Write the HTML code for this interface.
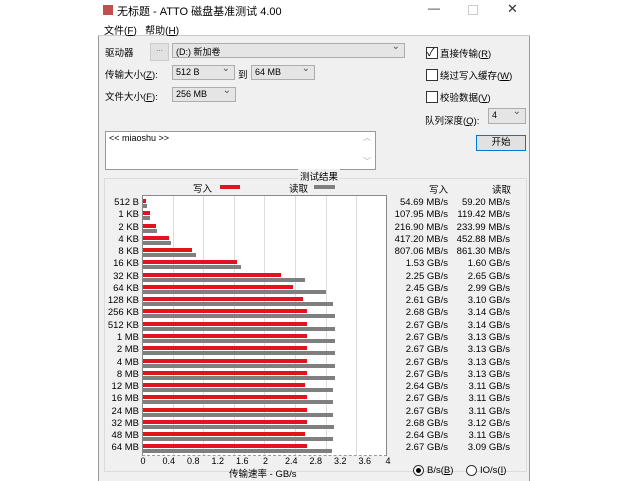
<!DOCTYPE html>
<html><head><meta charset="utf-8"><style>
*{margin:0;padding:0;box-sizing:border-box}
body{width:640px;height:481px;background:#fff;position:relative;overflow:hidden;font-family:"Liberation Sans","Noto Sans CJK SC",sans-serif;font-size:9.5px;color:#000}
.a{position:absolute;white-space:nowrap}
.win{position:absolute;left:98px;top:0;width:432px;height:481px;border:1px solid #9a9a9a;border-bottom:none;background:#f0f0f0}
.combo{position:absolute;background:#e5e5e5;border:1px solid #adadad;height:15px;padding:1px 3px;font-size:9px}
.combo:after{content:"⌄";position:absolute;right:4px;top:-3px;font-size:10px;color:#555}
.cb{position:absolute;width:12px;height:12px;border:1px solid #333;background:#fff}
.row{position:absolute;height:4px}
</style></head><body>
<div class="win"></div>
<div class="a" style="left:98px;top:0;width:432px;height:36px;background:#fff;border-bottom:1px solid #ccc"></div>
<div class="a" style="left:103px;top:5px;width:10px;height:10px;background:#c0504d"></div>
<div class="a" style="left:117px;top:3px;font-size:11px">无标题 - ATTO 磁盘基准测试 4.00</div>
<div class="a" style="left:428px;top:1px;font-size:12px;color:#333">—</div>
<div class="a" style="left:468px;top:5px;width:10px;height:10px;border:1px solid #ccc"></div>
<div class="a" style="left:507px;top:1px;font-size:13px;color:#333">✕</div>
<div class="a" style="left:104px;top:22px;font-size:10px">文件(<u>F</u>)&nbsp;&nbsp; 帮助(<u>H</u>)</div>

<div class="a" style="left:105px;top:45px">驱动器</div>
<div class="a" style="left:150px;top:43px;width:19px;height:18px;background:#e1e1e1;border:1px solid #ccc;font-size:8px;text-align:center;color:#666">...</div>
<div class="combo" style="left:172px;top:43px;width:233px">(D:) 新加卷</div>
<div class="a" style="left:105px;top:67px">传输大小(<u>Z</u>):</div>
<div class="combo" style="left:172px;top:65px;width:63px">512 B</div>
<div class="a" style="left:238px;top:67px">到</div>
<div class="combo" style="left:251px;top:65px;width:64px">64 MB</div>
<div class="a" style="left:105px;top:89px">文件大小(<u>F</u>):</div>
<div class="combo" style="left:172px;top:87px;width:64px">256 MB</div>

<div class="cb" style="left:426px;top:47px"></div><div class="a" style="left:427px;top:44px;font-size:11px">✓</div>
<div class="a" style="left:440px;top:46px">直接传输(<u>R</u>)</div>
<div class="cb" style="left:426px;top:69px"></div><div class="a" style="left:440px;top:68px">绕过写入缓存(<u>W</u>)</div>
<div class="cb" style="left:426px;top:91px"></div><div class="a" style="left:440px;top:90px">校验数据(<u>V</u>)</div>
<div class="a" style="left:425px;top:113px">队列深度(<u>Q</u>):</div>
<div class="combo" style="left:488px;top:108px;width:38px;height:16px">4</div>

<div class="a" style="left:105px;top:131px;width:271px;height:39px;background:#fff;border:1px solid #999;padding:1px 3px;font-size:9px">&lt;&lt; miaoshu &gt;&gt;</div>
<div class="a" style="left:363px;top:132px;font-size:8px;color:#aaa">︿</div>
<div class="a" style="left:363px;top:156px;font-size:8px;color:#aaa">﹀</div>
<div class="a" style="left:476px;top:135px;width:50px;height:16px;background:#e1e1e1;border:1px solid #0078d7;text-align:center;line-height:14px">开始</div>

<div class="a" style="left:104px;top:178px;width:423px;height:294px;border:1px solid #dcdcdc"></div>
<div class="a" style="left:298px;top:169px;font-size:9.5px;background:#f0f0f0;padding:0 2px">测试结果</div>
<div class="a" style="left:193px;top:181px">写入</div>
<div class="a" style="left:220px;top:185px;width:20px;height:4px;background:#e0141e"></div>
<div class="a" style="left:289px;top:181px">读取</div>
<div class="a" style="left:314px;top:185px;width:21px;height:4px;background:#7f7f7f"></div>
<div class="a" style="left:142px;top:195px;width:245px;height:261px;background:#fff;border:1px solid #888;border-bottom:1px dashed #999"></div>
<div class="a" style="left:429px;top:182px">写入</div>
<div class="a" style="left:492px;top:182px">读取</div>
<div id="c"></div>
<div class="a" style="left:229px;top:466px">传输速率 - GB/s</div>
<div class="a" style="left:413px;top:465px;width:11px;height:11px;border:1px solid #333;border-radius:50%;background:#fff"><div style="margin:2px;width:5px;height:5px;border-radius:50%;background:#000"></div></div>
<div class="a" style="left:427px;top:465px">B/s(<u>B</u>)</div>
<div class="a" style="left:466px;top:465px;width:11px;height:11px;border:1px solid #333;border-radius:50%;background:#fff"></div>
<div class="a" style="left:480px;top:465px">IO/s(<u>I</u>)</div>
<script>
var L=["512 B","1 KB","2 KB","4 KB","8 KB","16 KB","32 KB","64 KB","128 KB","256 KB","512 KB","1 MB","2 MB","4 MB","8 MB","12 MB","16 MB","24 MB","32 MB","48 MB","64 MB"];
var W=[.05469,.10795,.2169,.4172,.80706,1.53,2.25,2.45,2.61,2.68,2.67,2.67,2.67,2.67,2.67,2.64,2.67,2.67,2.68,2.64,2.67];
var R=[.0592,.11942,.23399,.45288,.8613,1.6,2.65,2.99,3.10,3.14,3.14,3.13,3.13,3.13,3.13,3.11,3.11,3.11,3.12,3.11,3.09];
var WS=["54.69 MB/s","107.95 MB/s","216.90 MB/s","417.20 MB/s","807.06 MB/s"],RS=["59.20 MB/s","119.42 MB/s","233.99 MB/s","452.88 MB/s","861.30 MB/s"];
var h="",s=61.25;
for(var i=1;i<8;i++)h+='<div class="a" style="left:'+(142+i*30.6)+'px;top:196px;width:1px;height:259px;background:#ddd"></div>';
for(var i=0;i<=10;i++){var v=(i*0.4).toFixed(1).replace(".0","");h+='<div class="a" style="left:'+(142+i*24.5-4)+'px;top:456px;width:10px;text-align:center;font-size:9px">'+v+'</div>';}
for(var i=0;i<21;i++){var y=203+i*12.27;
h+='<div class="a" style="left:100px;top:'+(y-6)+'px;width:39px;text-align:right">'+L[i]+'</div>';
h+='<div class="row a" style="left:143px;top:'+(y-4)+'px;width:'+Math.max(2,W[i]*s)+'px;background:#e0141e"></div>';
h+='<div class="row a" style="left:143px;top:'+(y+1)+'px;width:'+Math.max(2,R[i]*s)+'px;background:#7f7f7f"></div>';
var w=i<5?WS[i]:W[i].toFixed(2)+" GB/s",r=i<5?RS[i]:R[i].toFixed(2)+" GB/s";
h+='<div class="a" style="left:388px;top:'+(y-6)+'px;width:60px;text-align:right">'+w+'</div>';
h+='<div class="a" style="left:450px;top:'+(y-6)+'px;width:60px;text-align:right">'+r+'</div>';}
document.getElementById("c").innerHTML=h;
</script>
</body></html>
